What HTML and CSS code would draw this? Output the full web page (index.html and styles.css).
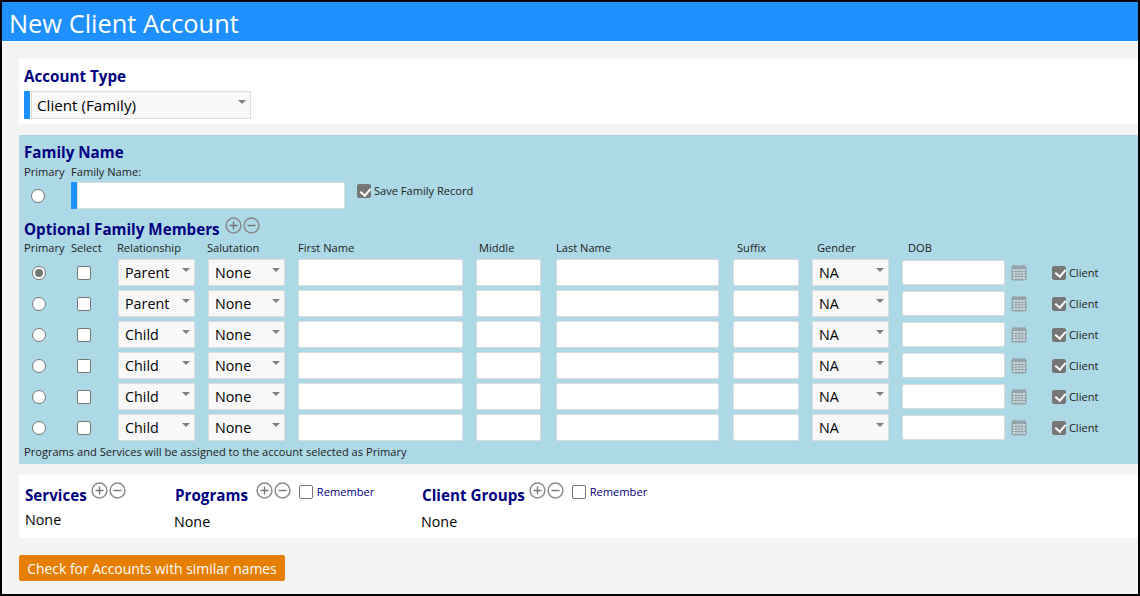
FILE: index.html
```html
<!DOCTYPE html>
<html lang="en">

<head>
    <meta charset="UTF-8">
    <title>New Client Account</title>
    <link rel="stylesheet" href="styles.css">
</head>

<body>
    <svg class="defs" width="0" height="0">
        <symbol id="plus" viewBox="0 0 17 17">
            <circle cx="8.5" cy="8.5" r="7.4" fill="none" stroke="#8a8a8a" stroke-width="1.5" />
            <path d="M4.5 8.5h8M8.5 4.5v8" stroke="#777" stroke-width="1.4" />
        </symbol>
        <symbol id="minus" viewBox="0 0 17 17">
            <circle cx="8.5" cy="8.5" r="7.4" fill="none" stroke="#8a8a8a" stroke-width="1.5" />
            <path d="M4.5 8.5h8" stroke="#777" stroke-width="1.4" />
        </symbol>
        <symbol id="cal" viewBox="0 0 16 17">
            <rect x="0.5" y="1.5" width="15" height="15" rx="2" fill="#96a3a9" />
            <rect x="2" y="5" width="12" height="10" fill="#d0dde2" />
            <path d="M3 0.5v3M13 0.5v3" stroke="#96a3a9" stroke-width="1.4" />
            <path d="M2 7.5h12M2 10h12M2 12.5h12M5 5v10M8 5v10M11 5v10" stroke="#96a3a9" stroke-width="1" />
        </symbol>
    </svg>

    <div class="frame">
        <div class="title-bar">New Client Account</div>

        <div class="content">
            <div class="panel account-panel">
                <h3>Account Type</h3>
                <div class="required">
                    <div class="select-box account-select">
                        <select>
                            <option>Client (Family)</option>
                        </select>
                    </div>
                </div>
            </div>

            <div class="family-panel">
                <h3>Family Name</h3>
                <div class="family-row">
                    <div class="family-primary">
                        <label class="small">Primary</label>
                        <input type="radio" name="primary">
                    </div>
                    <div>
                        <label class="small">Family Name:</label>
                        <div class="required">
                            <input type="text" class="family-input">
                        </div>
                    </div>
                    <label class="small save-record">
                        <input type="checkbox" checked> Save Family Record
                    </label>
                </div>

                <div class="members-head">
                    <h3>Optional Family Members</h3>
                    <svg class="round-btn"><use href="#plus" /></svg>
                    <svg class="round-btn"><use href="#minus" /></svg>
                </div>

                <div class="members">
                    <label class="small">Primary</label>
                    <label class="small">Select</label>
                    <label class="small head-select">Relationship</label>
                    <label class="small head-select">Salutation</label>
                    <label class="small">First Name</label>
                    <label class="small head-middle">Middle</label>
                    <label class="small">Last Name</label>
                    <label class="small head-suffix">Suffix</label>
                    <label class="small head-gender">Gender</label>
                    <label class="small head-dob">DOB</label>
                    <span></span>
                    <span></span>

                    <input type="radio" name="member" class="cell-radio" checked>
                    <input type="checkbox" class="cell-check">
                    <div class="select-box"><select><option>Parent</option></select></div>
                    <div class="select-box"><select><option>None</option></select></div>
                    <input type="text" class="w-first">
                    <input type="text" class="w-middle">
                    <input type="text" class="w-last">
                    <input type="text" class="w-suffix">
                    <div class="select-box"><select><option>NA</option></select></div>
                    <input type="text" class="w-dob">
                    <svg class="cal"><use href="#cal" /></svg>
                    <label class="small client"><input type="checkbox" checked> Client</label>

                    <input type="radio" name="member" class="cell-radio">
                    <input type="checkbox" class="cell-check">
                    <div class="select-box"><select><option>Parent</option></select></div>
                    <div class="select-box"><select><option>None</option></select></div>
                    <input type="text" class="w-first">
                    <input type="text" class="w-middle">
                    <input type="text" class="w-last">
                    <input type="text" class="w-suffix">
                    <div class="select-box"><select><option>NA</option></select></div>
                    <input type="text" class="w-dob">
                    <svg class="cal"><use href="#cal" /></svg>
                    <label class="small client"><input type="checkbox" checked> Client</label>

                    <input type="radio" name="member" class="cell-radio">
                    <input type="checkbox" class="cell-check">
                    <div class="select-box"><select><option>Child</option></select></div>
                    <div class="select-box"><select><option>None</option></select></div>
                    <input type="text" class="w-first">
                    <input type="text" class="w-middle">
                    <input type="text" class="w-last">
                    <input type="text" class="w-suffix">
                    <div class="select-box"><select><option>NA</option></select></div>
                    <input type="text" class="w-dob">
                    <svg class="cal"><use href="#cal" /></svg>
                    <label class="small client"><input type="checkbox" checked> Client</label>

                    <input type="radio" name="member" class="cell-radio">
                    <input type="checkbox" class="cell-check">
                    <div class="select-box"><select><option>Child</option></select></div>
                    <div class="select-box"><select><option>None</option></select></div>
                    <input type="text" class="w-first">
                    <input type="text" class="w-middle">
                    <input type="text" class="w-last">
                    <input type="text" class="w-suffix">
                    <div class="select-box"><select><option>NA</option></select></div>
                    <input type="text" class="w-dob">
                    <svg class="cal"><use href="#cal" /></svg>
                    <label class="small client"><input type="checkbox" checked> Client</label>

                    <input type="radio" name="member" class="cell-radio">
                    <input type="checkbox" class="cell-check">
                    <div class="select-box"><select><option>Child</option></select></div>
                    <div class="select-box"><select><option>None</option></select></div>
                    <input type="text" class="w-first">
                    <input type="text" class="w-middle">
                    <input type="text" class="w-last">
                    <input type="text" class="w-suffix">
                    <div class="select-box"><select><option>NA</option></select></div>
                    <input type="text" class="w-dob">
                    <svg class="cal"><use href="#cal" /></svg>
                    <label class="small client"><input type="checkbox" checked> Client</label>

                    <input type="radio" name="member" class="cell-radio">
                    <input type="checkbox" class="cell-check">
                    <div class="select-box"><select><option>Child</option></select></div>
                    <div class="select-box"><select><option>None</option></select></div>
                    <input type="text" class="w-first">
                    <input type="text" class="w-middle">
                    <input type="text" class="w-last">
                    <input type="text" class="w-suffix">
                    <div class="select-box"><select><option>NA</option></select></div>
                    <input type="text" class="w-dob">
                    <svg class="cal"><use href="#cal" /></svg>
                    <label class="small client"><input type="checkbox" checked> Client</label>
                </div>

                <div class="small note">Programs and Services will be assigned to the account selected as Primary</div>
            </div>

            <div class="panel lists-panel">
                <div class="list services">
                    <div class="list-head">
                        <h3>Services</h3>
                        <svg class="round-btn"><use href="#plus" /></svg>
                        <svg class="round-btn"><use href="#minus" /></svg>
                    </div>
                    <div class="none">None</div>
                </div>
                <div class="list programs">
                    <div class="list-head">
                        <h3>Programs</h3>
                        <svg class="round-btn"><use href="#plus" /></svg>
                        <svg class="round-btn"><use href="#minus" /></svg>
                        <label class="small remember"><input type="checkbox"> Remember</label>
                    </div>
                    <div class="none">None</div>
                </div>
                <div class="list groups">
                    <div class="list-head">
                        <h3>Client Groups</h3>
                        <svg class="round-btn"><use href="#plus" /></svg>
                        <svg class="round-btn"><use href="#minus" /></svg>
                        <label class="small remember"><input type="checkbox"> Remember</label>
                    </div>
                    <div class="none">None</div>
                </div>
            </div>

            <button class="check-button">Check for Accounts with similar names</button>
        </div>
    </div>
</body>

</html>
```

FILE: styles.css
```css
* {
    margin: 0;
    padding: 0;
    box-sizing: border-box;
}

body {
    font-family: 'Open Sans', 'Noto Sans', sans-serif;
    color: #000;
    background: #f4f4f4;
}

.defs {
    position: absolute;
}

.frame {
    height: 596px;
    border: 2px solid #000;
    overflow: hidden;
}

.title-bar {
    height: 39px;
    padding-left: 7px;
    background: #1e90ff;
    color: white;
    font-size: 25.4px;
    line-height: 43px;
}

.content {
    padding: 16px 0 0 17px;
    border-top: 2px solid #fff;
}

h3 {
    color: #000080;
    font-size: 15.2px;
    font-weight: 700;
    line-height: 20px;
}

.small {
    font-size: 11.1px;
    line-height: 16px;
    color: #222;
}

.panel {
    background: white;
}

.account-panel {
    height: 65px;
    padding: 7px 0 0 5px;
}

.account-panel h3 {
    margin-bottom: 5px;
}

.required {
    display: flex;
    border-left: 6px solid #1e90ff;
}

.account-panel .required {
    width: 227px;
    height: 28px;
    padding-left: 1px;
}

.select-box {
    position: relative;
    width: 77px;
    height: 27px;
    border: 1px solid #dcdcdc;
    background: #f8f8f8;
}

.select-box::after {
    content: '';
    position: absolute;
    top: 8px;
    right: 4px;
    border-left: 4px solid transparent;
    border-right: 4px solid transparent;
    border-top: 4px solid #808080;
}

.account-select {
    width: 100%;
    height: 28px;
}

.account-select select {
    padding-left: 5px;
    font-size: 15.2px;
}

select {
    display: block;
    width: 100%;
    height: 100%;
    padding-left: 6px;
    border: none;
    background: none;
    appearance: none;
    font-family: inherit;
    font-size: 14.3px;
    color: #000;
}

input[type="text"] {
    height: 27px;
    border: 1px solid #dcdcdc;
    border-radius: 2px;
    background: white;
}

input[type="radio"],
input[type="checkbox"] {
    appearance: none;
    display: inline-block;
    position: relative;
    width: 14px;
    height: 14px;
    border: 1px solid #767676;
    background: white;
    vertical-align: -3px;
}

input[type="radio"] {
    border-radius: 50%;
}

input[type="checkbox"] {
    border-radius: 2px;
}

input[type="radio"]:checked::after {
    content: '';
    position: absolute;
    inset: 2px;
    border-radius: 50%;
    background: #767676;
}

input[type="checkbox"]:checked {
    background: #767676;
}

input[type="checkbox"]:checked::after {
    content: '';
    position: absolute;
    left: 3.5px;
    top: 0.5px;
    width: 5px;
    height: 8px;
    border: solid white;
    border-width: 0 2.4px 2.4px 0;
    transform: rotate(40deg);
}

.family-panel {
    height: 329px;
    margin-top: 11px;
    padding: 7px 0 0 5px;
    background: lightblue;
}

.family-panel > h3 {
    margin-bottom: -3px;
}

.family-row {
    display: flex;
    height: 60px;
}

.family-primary {
    width: 47px;
}

.family-primary input {
    display: block;
    margin: 8px 0 0 7px;
}

.family-row .required {
    width: 274px;
    height: 27px;
    margin-top: 1px;
}

.family-input {
    width: 100%;
    border-radius: 0 !important;
}

.save-record {
    margin: 24px 0 0 12px;
}

.members-head {
    display: flex;
    align-items: flex-start;
    height: 19px;
    gap: 1px;
}

.round-btn {
    width: 17px;
    height: 17px;
}

.members-head .round-btn {
    margin-top: -2px;
}

.members-head h3 {
    margin-right: 4px;
}

.members {
    display: grid;
    grid-template-columns: 47px 47px 90px 90px 178px 80px 177px 79px 90px 109px 41px 1fr;
    grid-template-rows: 15px repeat(6, 27px);
    row-gap: 4px;
    align-items: center;
    margin-top: 2px;
}

.members .small {
    align-self: start;
}

.head-select {
    margin-left: -1px;
}

.head-middle {
    padding-left: 3px;
}

.head-suffix {
    padding-left: 4px;
}

.head-gender {
    padding-left: 5px;
}

.head-dob {
    padding-left: 6px;
}

.cell-radio {
    margin-left: 8px;
}

.cell-check {
    margin-left: 6px;
}

.w-first {
    width: 165px;
}

.w-middle {
    width: 65px;
}

.w-last {
    width: 163px;
}

.w-suffix {
    width: 66px;
}

.w-dob {
    width: 103px;
    height: 25px !important;
}

.cal {
    width: 16px;
    height: 17px;
}

.members .client {
    align-self: center;
}

.lists-panel {
    display: flex;
    height: 63px;
    margin-top: 11px;
    padding: 8px 0 0 6px;
}

.note {
    margin-top: 3px;
}

.list {
    flex: none;
}

.services {
    width: 150px;
}

.programs {
    width: 247px;
}

.list-head {
    display: flex;
    align-items: flex-start;
    gap: 1px;
    height: 22px;
}

.list-head h3 {
    margin-top: 2px;
    margin-right: 3px;
}

.list-head .round-btn {
    margin-top: -1px;
}

.programs h3 {
    margin-right: 7px;
}

.remember {
    margin-left: 7px;
    margin-top: 1px;
    color: #000080;
}

.remember input {
    margin-right: 1px;
}

.none {
    font-size: 14.3px;
    line-height: 20px;
    margin-top: 5px;
}

.programs .none,
.groups .none {
    margin-top: 7px;
    margin-left: -1px;
}

.check-button {
    display: block;
    width: 266px;
    height: 26px;
    margin-top: 17px;
    border: none;
    border-radius: 2px;
    background: #e67e00;
    color: white;
    font-family: inherit;
    font-size: 13.9px;
}
```
